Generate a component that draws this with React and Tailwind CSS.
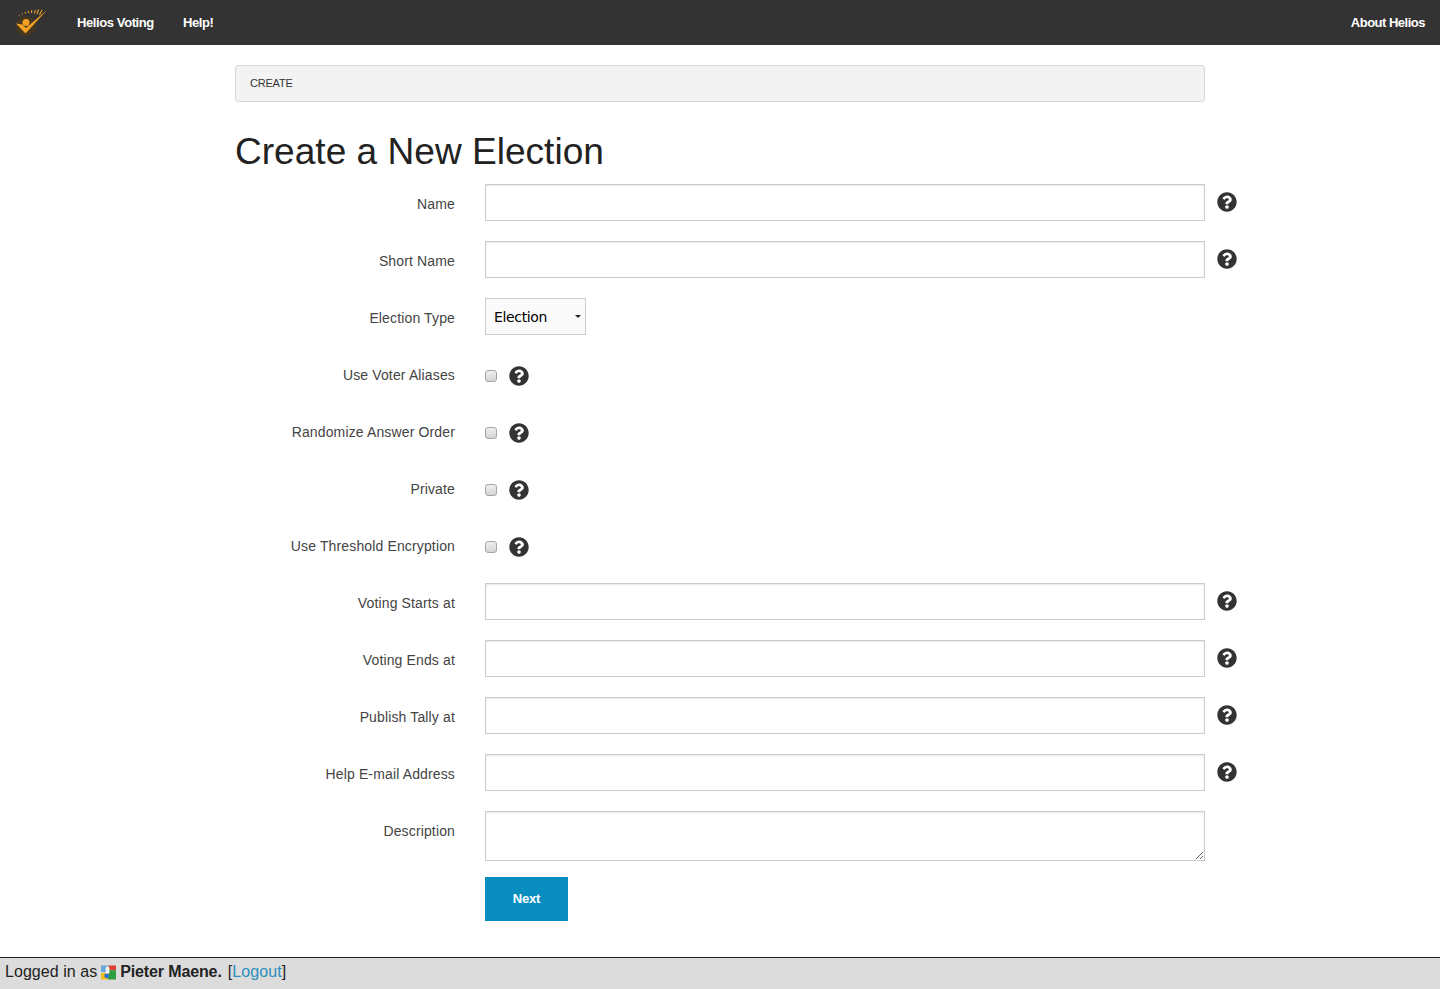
import React from "react";
import { FaQuestionCircle } from "react-icons/fa";

const Help = () => (
  <FaQuestionCircle className="block w-[20px] h-[20px] text-[#333]" />
);

const Label = ({ children }) => (
  <label className="w-[220px] shrink-0 text-right text-[14px] leading-[20px] pt-[10px] text-[#444] mr-[30px] tracking-[0.14px]">
    {children}
  </label>
);

const inputCls =
  "block w-[720px] h-[37px] border border-[#ccc] bg-white shadow-[inset_0_1px_2px_rgba(0,0,0,0.1)] outline-none";

const InputRow = ({ label }) => (
  <div className="flex items-start h-[37px] mb-[20px]">
    <Label>{label}</Label>
    <input type="text" className={inputCls} />
    <span className="ml-[12px] mt-[8px]"><Help /></span>
  </div>
);

const CheckRow = ({ label }) => (
  <div className="flex items-start h-[37px] mb-[20px]">
    <Label>{label}</Label>
    <div className="flex items-center h-[42px]">
      <input
        type="checkbox"
        className="appearance-none block w-[12px] h-[12px] rounded-[3px] border border-[#a5a5a5] bg-gradient-to-b from-[#f0f0f0] to-[#d4d4d4]"
      />
      <span className="ml-[12px]"><Help /></span>
    </div>
  </div>
);

const Logo = () => (
  <svg width="34" height="30" viewBox="0 0 34 30" className="block">
    <circle cx="11" cy="19" r="10" fill="#46371f" />
    <circle cx="11" cy="15.500" r="3.500" fill="#f7a125" />
    <path d="M1 16.500 L7.500 17.500 L11 21 L32 3 L10.500 26.500 Z" fill="#f7a125" />
    <path
      d="M4.500 9l-.5-.6M7.500 7.500l-.6-1M10.500 6.500l-.4-1.500M13.500 6l-.2-2M16.500 6l.2-3M19.500 6.500l.7-3.500M22 7l1.500-4.500M24.500 8l2.500-5"
      stroke="#e3962a"
      strokeWidth="1.200"
      fill="none"
    />
  </svg>
);

const GoogleIcon = () => (
  <svg width="15" height="15" viewBox="0 0 16 15" className="block">
    <rect x="0" y="0" width="8" height="7" fill="#6aa5dc" />
    <rect x="8" y="0" width="8" height="5" fill="#e0402f" />
    <rect x="7" y="5" width="9" height="10" fill="#2f9e41" />
    <rect x="0" y="8" width="7" height="7" fill="#f5bd1f" />
    <rect x="5" y="1" width="4" height="8" rx="2" fill="#f4f4f4" />
    <circle cx="6" cy="11" r="2.500" fill="#2a6fd6" />
  </svg>
);

export default function App() {
  return (
    <div className="min-h-[989px] flex flex-col bg-white font-['Liberation_Sans',Arial,sans-serif] text-[#222]">
      <nav className="h-[45px] bg-[#333] flex items-center text-white text-[13px] font-bold tracking-[-0.4px]">
        <span className="ml-[15px] -mt-[1px]"><Logo /></span>
        <a className="ml-[28px]">Helios Voting</a>
        <a className="ml-[29px]">Help!</a>
        <a className="ml-auto mr-[15px] tracking-[-0.5px]">About Helios</a>
      </nav>

      <main className="w-[1010px] ml-[235px] mt-[20px]">
        <div className="w-[970px] h-[37px] border border-[#d9d9d9] rounded-[3px] bg-[#f3f3f3] flex items-center pl-[14px] text-[11px] text-[#333] tracking-[-0.2px]">
          CREATE
        </div>
        <h1 className="mt-[27px] h-[55px] text-[37.100px] leading-[44px] font-normal text-[#222]">
          Create a New Election
        </h1>

        <InputRow label="Name" />
        <InputRow label="Short Name" />

        <div className="flex items-start h-[37px] mb-[20px]">
          <Label>Election Type</Label>
          <div className="relative w-[101px] h-[37px]">
            <select className="appearance-none block w-full h-full border border-[#ccc] bg-[#fafafa] pl-[8px] pt-[2px] text-[14px] text-black outline-none rounded-none font-['DejaVu_Sans',sans-serif] tracking-[-0.35px]">
              <option>Election</option>
            </select>
            <span className="absolute right-[5px] top-[17px] w-0 h-0 border-l-[3px] border-r-[3px] border-t-[3px] border-l-transparent border-r-transparent border-t-[#222]" />
          </div>
        </div>

        <CheckRow label="Use Voter Aliases" />
        <CheckRow label="Randomize Answer Order" />
        <CheckRow label="Private" />
        <CheckRow label="Use Threshold Encryption" />
        <InputRow label="Voting Starts at" />
        <InputRow label="Voting Ends at" />
        <InputRow label="Publish Tally at" />
        <InputRow label="Help E-mail Address" />

        <div className="flex items-start h-[50px] mb-[16px]">
          <Label>Description</Label>
          <textarea className="block w-[720px] h-[50px] border border-[#ccc] bg-white shadow-[inset_0_1px_2px_rgba(0,0,0,0.1)] outline-none" />
        </div>

        <button className="block ml-[250px] w-[83px] h-[44px] bg-[#0a8ebf] text-white text-[13px] font-bold tracking-[-0.2px]">
          Next
        </button>
      </main>

      <footer className="mt-auto h-[32px] border-t border-[#222] bg-[#dcdcdc] flex items-center pl-[5px] pb-[4px] text-[16px] text-[#222] tracking-[0.05px]">
        <span>Logged in as</span>
        <span className="ml-[4px] mt-[1px]"><GoogleIcon /></span>
        <b className="ml-[4px] tracking-[-0.13px]">Pieter Maene.</b>
        <span className="ml-[6px] tracking-[0.1px]">[<a className="text-[#2a8fbd]">Logout</a>]</span>
      </footer>
    </div>
  );
}
